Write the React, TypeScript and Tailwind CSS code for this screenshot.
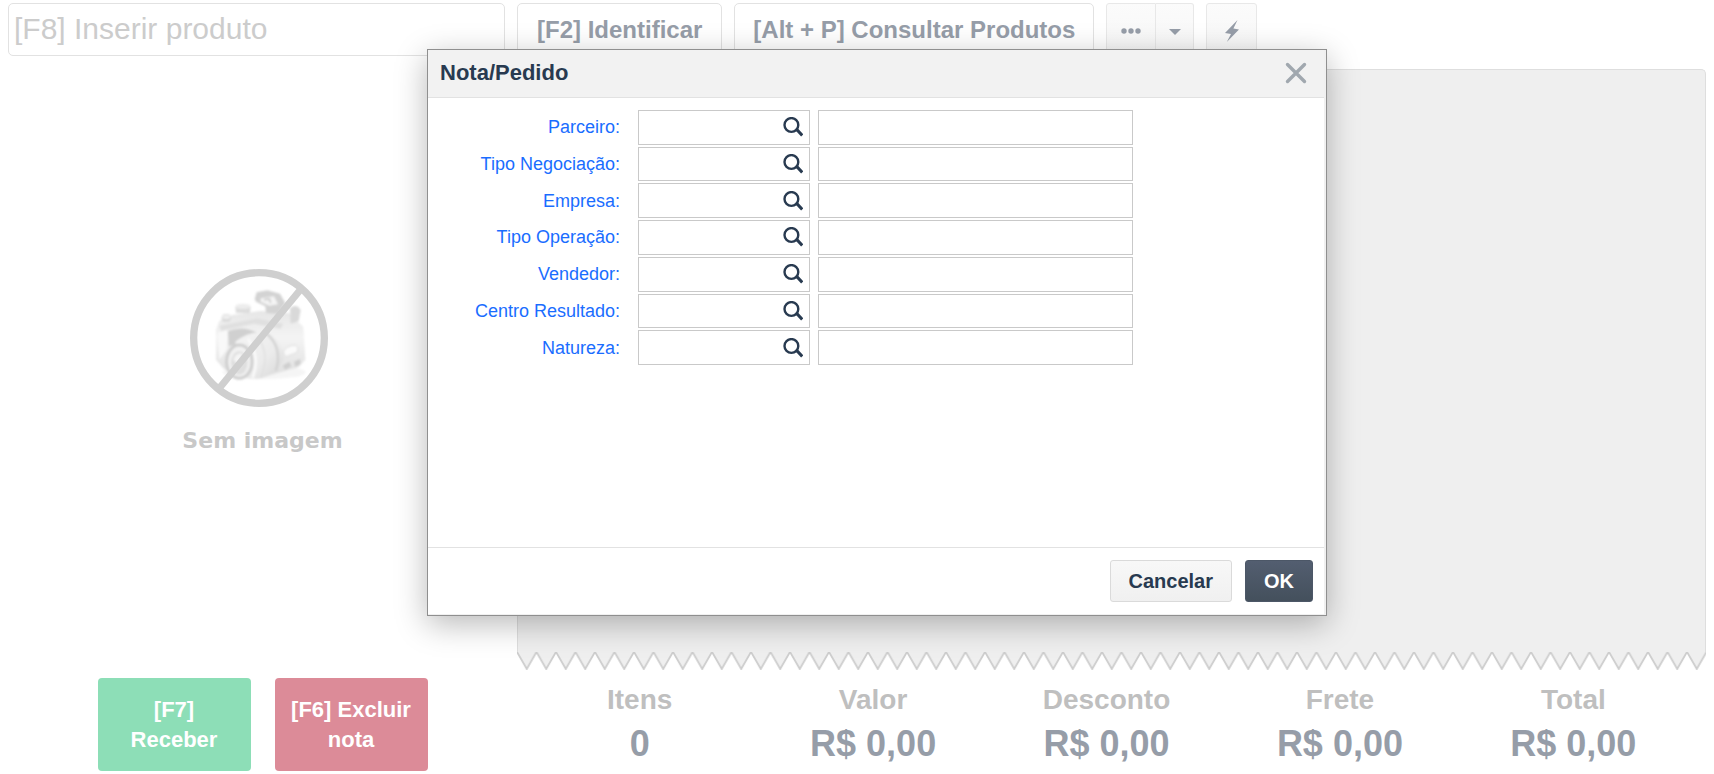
// App.tsx
import { useState } from "react";

interface LookupField {
  id: string;
  label: string;
}

interface Total {
  label: string;
  value: string;
}

const lookupFields: LookupField[] = [
  { id: "parceiro", label: "Parceiro:" },
  { id: "tipo-negociacao", label: "Tipo Negociação:" },
  { id: "empresa", label: "Empresa:" },
  { id: "tipo-operacao", label: "Tipo Operação:" },
  { id: "vendedor", label: "Vendedor:" },
  { id: "centro-resultado", label: "Centro Resultado:" },
  { id: "natureza", label: "Natureza:" },
];

const totals: Total[] = [
  { label: "Itens", value: "0" },
  { label: "Valor", value: "R$ 0,00" },
  { label: "Desconto", value: "R$ 0,00" },
  { label: "Frete", value: "R$ 0,00" },
  { label: "Total", value: "R$ 0,00" },
];

const SearchIcon: React.FC = () => (
  <svg viewBox="0 0 20 20" className="h-5 w-5" fill="none" stroke="#283a50">
    <circle cx="8.4" cy="8" r="6.9" strokeWidth="2.4" />
    <path d="M12.6 12.8 L14.4 13.2 L19.2 18.4" strokeWidth="3" />
  </svg>
);

const NoImageIcon: React.FC = () => (
  <svg viewBox="88 58 438 414" className="h-[138px] w-[146px]">
    <defs>
      <linearGradient id="body" x1="0" y1="0" x2="0" y2="1">
        <stop offset="0" stopColor="#e6e6e6" />
        <stop offset="0.4" stopColor="#f4f4f4" />
        <stop offset="1" stopColor="#dedede" />
      </linearGradient>
      <linearGradient id="barrel" x1="0" y1="0" x2="1" y2="1">
        <stop offset="0" stopColor="#f5f5f5" />
        <stop offset="0.6" stopColor="#ebebeb" />
        <stop offset="1" stopColor="#d6d6d6" />
      </linearGradient>
      <filter id="soft" x="-10%" y="-10%" width="120%" height="120%">
        <feGaussianBlur stdDeviation="3" />
      </filter>
    </defs>
    <g filter="url(#soft)">
      <ellipse cx="310" cy="368" rx="125" ry="20" fill="#f5f5f5" />
      {/* body */}
      <path
        d="M166 240 L176 214 L215 196 L300 184 L385 190 L428 232 L434 330 L414 352 L300 384 L190 358 L166 330 Z"
        fill="url(#body)"
      />
      <path d="M176 228 L290 206 L368 222 L360 238 L280 222 L182 244 Z" fill="#e0e0e0" />
      <path d="M172 250 L200 240 L198 300 L176 330 Z" fill="#f9f9f9" />
      <path d="M202 244 Q250 226 290 250 L262 276 L204 290 Z" fill="#d0d0d0" />
      {/* dials */}
      <path d="M182 204 L188 194 L206 194 L212 206 L206 216 L186 216 Z" fill="#dadada" />
      <ellipse cx="197" cy="202" rx="12" ry="6" fill="#efefef" />
      <path d="M224 172 L226 190 L268 190 L270 172 Z" fill="#dddddd" />
      <ellipse cx="247" cy="170" rx="23" ry="8" fill="#ededed" />
      {/* flash */}
      <path d="M282 148 L288 128 L320 122 L358 132 L374 160 L352 192 L316 190 L314 170 L286 156 Z" fill="#d3d3d3" />
      <path d="M300 146 L340 140 L352 164 L326 168 L300 156 Z" fill="#f4f4f4" />
      <path d="M310 150 L326 148 L330 160" stroke="#cdcdcd" strokeWidth="5" fill="none" />
      <path d="M388 176 Q408 160 420 182 L414 214 L390 222 Z" fill="#d9d9d9" />
      {/* grip panel */}
      <path d="M368 306 Q376 288 404 286 L412 294 L410 308 L374 322 Z" fill="#fafafa" stroke="#dedede" strokeWidth="3" />
      <path d="M366 348 L386 336 L392 350 L374 360 Z M400 336 L418 328 L420 342 L404 352 Z" fill="#cfcfcf" />
      {/* lens */}
      <path d="M224 276 Q270 240 320 250 Q366 272 368 330 Q346 376 290 388 L238 384 Z" fill="url(#barrel)" />
      <path d="M318 252 Q366 292 346 364" stroke="#d2d2d2" strokeWidth="7" fill="none" />
      <path d="M290 262 Q330 312 300 384" stroke="#dfdfdf" strokeWidth="4" fill="none" />
      <path d="M262 268 Q300 322 276 384" stroke="#fafafa" strokeWidth="8" fill="none" />
      <ellipse cx="236" cy="336" rx="38" ry="50" fill="#f2f2f2" stroke="#cfcfcf" strokeWidth="9" />
      <ellipse cx="236" cy="340" rx="25" ry="35" fill="#dfdfdf" />
      <path d="M218 330 Q228 306 246 312 L232 344 Z" fill="#f5f5f5" />
    </g>
    <circle cx="295" cy="265" r="196" fill="none" stroke="#cfcfcf" strokeWidth="22" />
    <path d="M174 418 L424 114" stroke="#cfcfcf" strokeWidth="21" />
  </svg>
);

// Torn paper edge under the receipt, repeated across its width
const TornEdge: React.FC = () => (
  <svg className="block h-[18px] w-full shrink-0" aria-hidden="true">
    <defs>
      <pattern id="teeth" width="19.5" height="18" patternUnits="userSpaceOnUse">
        <path d="M0 0 L9.75 17 L19.5 0 Z" fill="#efefef" />
        <path d="M0 0 L9.75 17 L19.5 0" fill="none" stroke="#cdcdcd" strokeWidth="1.8" />
      </pattern>
    </defs>
    <rect width="100%" height="18" fill="url(#teeth)" />
  </svg>
);

const TopBar: React.FC = () => (
  <div className="flex h-[53px] gap-3">
    <input
      type="text"
      aria-label="Inserir produto"
      placeholder="[F8] Inserir produto"
      className="w-[497px] rounded-[5px] border border-[#e2e2e2] bg-white px-[5px] pb-[2px] text-[30px] text-[#969da8] placeholder:text-[#cccccc]"
    />
    <button className="rounded-[5px] border border-[#e2e2e2] bg-white px-[19px] pt-px text-2xl font-bold whitespace-nowrap text-[#969da8]">
      [F2] Identificar
    </button>
    <button className="rounded-[5px] border border-[#e2e2e2] bg-white px-[18px] pt-px text-2xl font-bold whitespace-nowrap text-[#969da8]">
      [Alt + P] Consultar Produtos
    </button>
    <div className="flex">
      <button
        aria-label="Mais opções"
        className="flex w-[50px] items-center justify-center rounded-l-[3px] border border-[#e8e8e8] bg-gradient-to-b from-[#fbfbfb] to-[#f7f7f7] pt-[2px]"
      >
        <svg viewBox="0 0 20 6" className="h-[6px] w-5" fill="#969da8">
          <circle cx="3" cy="3" r="2.7" />
          <circle cx="10" cy="3" r="2.7" />
          <circle cx="17" cy="3" r="2.7" />
        </svg>
      </button>
      <button
        aria-label="Abrir menu"
        className="flex w-[38px] items-center justify-center rounded-r-[3px] border border-l-0 border-[#e8e8e8] bg-gradient-to-b from-[#fbfbfb] to-[#f7f7f7] pt-1"
      >
        <svg viewBox="0 0 12 6" className="h-[6px] w-3" fill="#969da8">
          <path d="M0 0 H12 L6 6 Z" />
        </svg>
      </button>
    </div>
    <button
      aria-label="Ações rápidas"
      className="flex w-[51px] items-center justify-center rounded-[3px] border border-[#e8e8e8] bg-gradient-to-b from-[#fbfbfb] to-[#f7f7f7] pt-[2px]"
    >
      <svg viewBox="0 0 14 22" className="h-[22px] w-[14px]" fill="#969da8">
        <path d="M12.5 0 L0 13 L6 14 L1.8 22 L14 9.4 L8.4 8.4 Z" />
      </svg>
    </button>
  </div>
);

const OrderDialog: React.FC<{ onClose: () => void }> = ({ onClose }) => (
  <div className="fixed inset-0 flex items-start justify-center pt-[49px] pl-10">
    <div
      role="dialog"
      aria-labelledby="dialog-title"
      className="w-[900px] border border-[#8f8f8f] bg-[#f0f0f0] pr-[2px] pb-px shadow-[0_8px_30px_rgba(0,0,0,0.28)]"
    >
      <div className="flex h-12 items-center justify-between border-b border-[#e2e2e2] bg-[#f2f2f2] pr-[17px] pb-[2px] pl-3">
        <h2 id="dialog-title" className="text-[22px] font-bold text-[#283a50]">
          Nota/Pedido
        </h2>
        <button aria-label="Fechar" onClick={onClose}>
          <svg
            viewBox="0 0 22 22"
            className="h-[22px] w-[22px]"
            fill="none"
            stroke="#a1a8af"
            strokeWidth="3.4"
            strokeLinecap="round"
          >
            <path d="M2.5 2.5 L19.5 19.5 M19.5 2.5 L2.5 19.5" />
          </svg>
        </button>
      </div>

      <div className="min-h-[449px] bg-white pt-3">
        <div className="grid h-[255px] grid-rows-7 gap-[2px]">
          {lookupFields.map((field) => (
            <div key={field.id} className="flex items-stretch">
              <label
                htmlFor={field.id}
                className="mr-[18px] w-48 self-center text-right text-lg leading-6 text-[#1a6dff]"
              >
                {field.label}
              </label>
              <div className="mr-2 flex w-[172px] border border-[#c9c9c9] bg-white">
                <input id={field.id} type="text" className="min-w-0 flex-1 px-2 text-lg outline-none" />
                <button aria-label={`Pesquisar ${field.label}`} className="pr-[6px]">
                  <SearchIcon />
                </button>
              </div>
              <input
                type="text"
                readOnly
                aria-label={`Descrição ${field.label}`}
                className="w-[315px] border border-[#c9c9c9] bg-white px-2 text-lg outline-none"
              />
            </div>
          ))}
        </div>
      </div>

      <div className="flex justify-end gap-[13px] border-t border-[#e2e2e2] bg-white py-3 pr-[11px]">
        <button
          onClick={onClose}
          className="h-[42px] rounded-[3px] border border-[#dadada] bg-gradient-to-b from-[#f8f8f8] to-[#f0f0f0] px-[18px] text-xl font-bold text-[#283a50]"
        >
          Cancelar
        </button>
        <button
          onClick={onClose}
          className="h-[42px] rounded-[3px] border border-[#4c5767] bg-gradient-to-b from-[#535e70] to-[#44505c] px-[18px] text-xl font-bold text-white"
        >
          OK
        </button>
      </div>
    </div>
  </div>
);

const App: React.FC = () => {
  const [open, setOpen] = useState(true);

  return (
    <div className="flex h-screen flex-col bg-white px-2 pt-[3px] font-['Liberation_Sans',Arial,sans-serif]">
      <TopBar />

      <div className="flex min-h-0 flex-1">
        {/* Product picture and main actions */}
        <div className="flex w-[509px] flex-col">
          <div className="flex flex-1 flex-col items-center justify-center gap-[18px] pb-2">
            <NoImageIcon />
            <p className="font-['DejaVu_Sans',Verdana,sans-serif] text-[22px] leading-8 font-bold text-[#c8c8c8]">
              Sem imagem
            </p>
          </div>
          <div className="flex justify-center gap-6 pb-[3px]">
            <button className="h-[93px] w-[153px] rounded-[4px] bg-[#8ddeb7] px-4 text-[22px] leading-[30px] font-bold text-white">
              [F7] Receber
            </button>
            <button className="h-[93px] w-[153px] rounded-[4px] bg-[#dc8b98] px-4 text-[22px] leading-[30px] font-bold text-white">
              [F6] Excluir nota
            </button>
          </div>
        </div>

        {/* Receipt */}
        <div className="flex flex-1 flex-col pt-[13px]">
          <div className="flex-1 rounded-t-[5px] border border-b-0 border-[#dedede] bg-[#efefef]" />
          <TornEdge />
          <dl className="flex pt-[10px] pr-4 pb-[6px] pl-[6px] text-center font-bold">
            {totals.map((total) => (
              <div key={total.label} className="flex-1">
                <dt className="text-[28px] leading-10 text-[#bfbfbf]">{total.label}</dt>
                <dd className="text-4xl leading-[48px] text-[#969da8]">{total.value}</dd>
              </div>
            ))}
          </dl>
        </div>
      </div>

      {open && <OrderDialog onClose={() => setOpen(false)} />}
    </div>
  );
};

export default App;
